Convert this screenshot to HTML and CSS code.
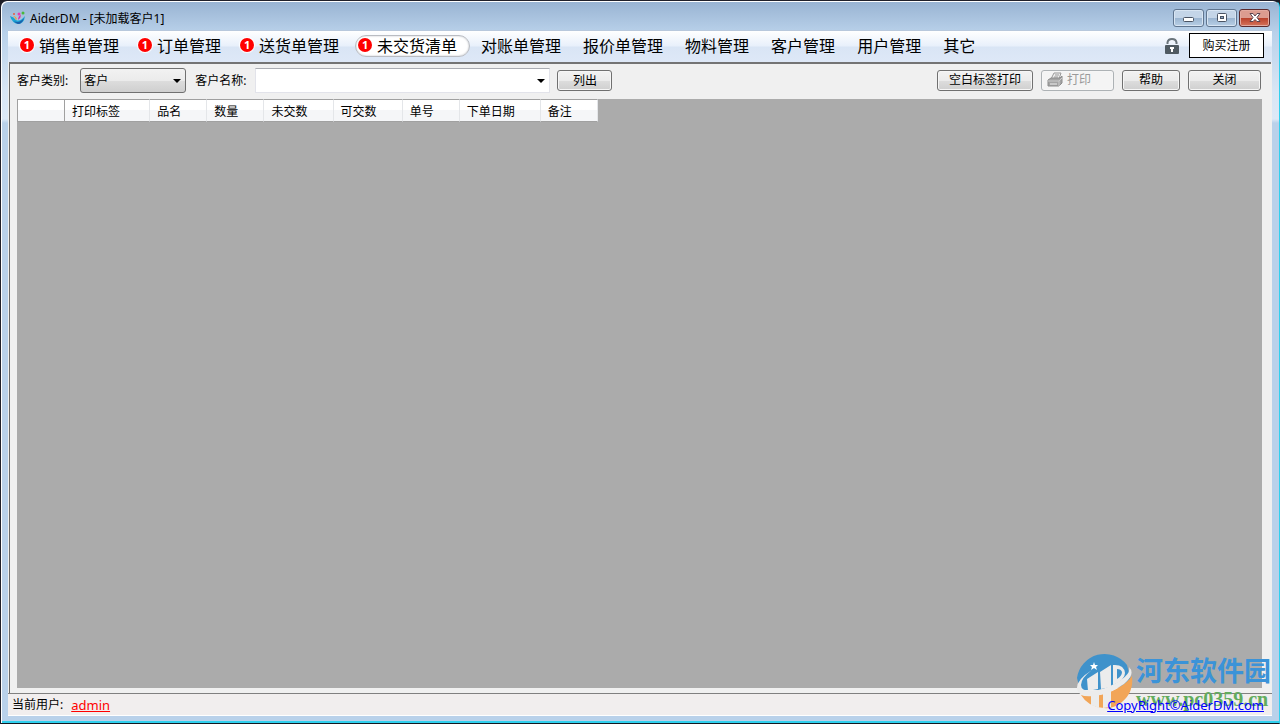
FILE: index.html
```html
<!DOCTYPE html>
<html lang="zh-CN">
   <head>
      <meta charset="UTF-8">
      <meta name="viewport" content="width=device-width, initial-scale=1.0">
      <title>AiderDM - [未加载客户1]</title>
      <link rel="stylesheet" href="styles.css">
   </head>
   <body>
      <div class="window">
         <header class="titlebar">
            <svg class="app-icon" width="16" height="16" viewBox="0 0 16 16">
               <path d="M0 6Q4 7 6 10Q10 12 15 6Q14 14 8 14Q2 13 0 6" fill="#1aa3d4"/>
               <path d="M4 11Q9 14 14 8Q12 14 8 14Q5 13 4 11" fill="#1c5eac"/>
               <path d="M3 6Q6 6 7 9L6 10Q5 7 3 6" fill="#f0a03c"/>
               <path d="M8 10Q8 6 11 5Q11 8 8 10" fill="#e22fa0"/>
               <circle cx="4" cy="4" r="1" fill="#e85a3c"/>
               <circle cx="9" cy="4" r="1.5" fill="#e83ab0"/>
               <circle cx="13" cy="3" r="1.5" fill="#48b83c"/>
            </svg>
            <h1>AiderDM - [未加载客户1]</h1>
            <div class="window-buttons">
               <button type="button" aria-label="最小化">
                  <svg width="14" height="12" viewBox="0 0 14 12"><rect x="1.5" y="5.5" width="10" height="4" rx="1" fill="#fff" stroke="#4a5464"/></svg>
               </button>
               <button type="button" aria-label="最大化">
                  <svg width="14" height="12" viewBox="0 0 14 12"><rect x="2.5" y="1.5" width="9" height="8" rx="1" fill="#fff" stroke="#4a5464"/><rect x="5.5" y="4.5" width="3" height="2" fill="#8aa4c2" stroke="#4a5464"/></svg>
               </button>
               <button type="button" class="window-close" aria-label="关闭窗口">
                  <svg width="14" height="12" viewBox="0 0 14 12"><path d="M2 1.5H5L7 4L9 1.5H12L9 5.5L12 9.5H9L7 7.5L5 9.5H2L5 5.5Z" fill="#fff" stroke="#5a4450"/></svg>
               </button>
            </div>
         </header>
         <div class="client">
            <nav class="menu">
               <a href="#"><span class="badge">1</span>销售单管理</a>
               <a href="#"><span class="badge">1</span>订单管理</a>
               <a href="#"><span class="badge">1</span>送货单管理</a>
               <a href="#" class="active"><span class="badge">1</span>未交货清单</a>
               <a href="#">对账单管理</a>
               <a href="#">报价单管理</a>
               <a href="#">物料管理</a>
               <a href="#">客户管理</a>
               <a href="#">用户管理</a>
               <a href="#">其它</a>
               <svg class="lock" width="16" height="18" viewBox="0 0 16 18">
                  <path d="M3.5 7V5.500Q4 2 8 2T12.500 5.500V7" fill="none" stroke="#6a747b" stroke-width="2"/>
                  <rect x="1" y="8" width="14" height="9" rx="1" fill="#4f5a62"/>
                  <path d="M6 10H10V12H9V15H7V12H6Z" fill="#fff"/>
               </svg>
               <button type="button" class="register">购买注册</button>
            </nav>
            <main class="panel">
               <div class="toolbar">
                  <label for="customer-type">客户类别:</label>
                  <div class="combo combo-type">
                     <select id="customer-type"><option>客户</option></select>
                  </div>
                  <label for="customer-name">客户名称:</label>
                  <div class="combo combo-name">
                     <select id="customer-name"><option></option></select>
                  </div>
                  <button type="button" class="btn btn-list">列出</button>
                  <div class="actions">
                     <button type="button" class="btn btn-blank">空白标签打印</button>
                     <button type="button" class="btn btn-print" disabled>
                        <svg width="16" height="16" viewBox="0 0 16 16">
                           <path d="M4 7L7 1H14L12 7Z" fill="#eee" stroke="#999"/>
                           <path d="M8 3H12M7 5H11" stroke="#999"/>
                           <path d="M1 8L4 6H13L15 4V11L12 14H1Z" fill="#a4a4a4" stroke="#8c8c8c"/>
                           <path d="M1 9H12L15 6M12 9V14" fill="none" stroke="#ccc"/>
                           <path d="M3 12H10" stroke="#eee"/>
                        </svg>打印
                     </button>
                     <button type="button" class="btn btn-help">帮助</button>
                     <button type="button" class="btn btn-close">关闭</button>
                  </div>
               </div>
               <div class="grid">
                  <table>
                     <colgroup>
                        <col class="col-head"><col class="col-print"><col class="col-s"><col class="col-s"><col class="col-m"><col class="col-m"><col class="col-s"><col class="col-date"><col class="col-s">
                     </colgroup>
                     <thead>
                        <tr>
                           <th></th>
                           <th>打印标签</th>
                           <th>品名</th>
                           <th>数量</th>
                           <th>未交数</th>
                           <th>可交数</th>
                           <th>单号</th>
                           <th>下单日期</th>
                           <th>备注</th>
                        </tr>
                     </thead>
                  </table>
               </div>
            </main>
            <footer class="statusbar">
               <span>当前用户:</span>
               <a href="#" class="user">admin</a>
               <a href="#" class="copyright">CopyRight©AiderDM.com</a>
            </footer>
         </div>
         <div class="watermark">
            <svg width="58" height="58" viewBox="0 0 58 58">
               <path d="M1 26A28 28 0 0 1 51 13L56 32L28 38H4Z" fill="#3f92cb"/>
               <path d="M56 24Q58 40 46 50Q38 57 28 56Q12 55 5 43Q26 46 42 36Q52 30 56 24" fill="#f2a557"/>
               <path d="M16 18Q0 28 1 37Q3 46 18 44Q34 42 48 32Q60 22 53 15Q55 21 45 28Q30 38 15 39Q5 39 5 33Q5 26 16 18" fill="#ececec"/>
               <path d="M11 27L22 20V37L12 39ZM24 20L35 13V35L25 37Z" fill="#ececec"/>
               <path d="M37 13Q48 12 49 21Q49 28 37 33ZM41 17V27Q46 24 46 20Q45 17 41 17" fill="#ececec" fill-rule="evenodd"/>
               <path d="M15 43L23 42V56L15 53ZM27 41L35 38V55L27 56Z" fill="#ececec"/>
               <path d="M18 10L19 13L22 13L20 15L21 18L18 16L15 18L16 15L14 13L17 13Z" fill="#fff"/>
            </svg>
            <div>
               <div class="watermark-name">河东软件园</div>
               <div class="watermark-url">www.pc0359.cn</div>
            </div>
         </div>
      </div>
   </body>
</html>
```
FILE: styles.css
```css
* {
box-sizing: border-box;
}
body {
margin: 0;
background: #1c1c24;
color: #000;
font-family: "Noto Sans", "Noto Sans CJK SC", sans-serif;
font-size: 12px;
line-height: 16px;
}
button, select {
font: inherit;
color: inherit;
}
.window {
position: relative;
display: flex;
flex-direction: column;
min-height: 100vh;
padding: 1px 7px 7px;
border: 1px solid #20202a;
border-right-color: #30d0ee;
border-bottom-color: #141820;
border-radius: 7px 7px 0 0;
background: linear-gradient(#98b3d2, #b9d1ea 32px, #d8e6f5 90px, #dce9f7 118px, #b9d1ea 122px);
box-shadow: inset 1px 1px 0 #fff, inset 0 -2px 0 #30d0ee;
}
.titlebar {
display: flex;
align-items: center;
height: 28px;
padding-left: 2px;
}
.titlebar h1 {
flex: 1;
margin: 5px 0 0 4px;
font-size: 12px;
font-weight: 400;
}
.app-icon {
margin-top: 4px;
}
.window-buttons {
display: flex;
gap: 2px;
padding: 4px 2px 0 0;
}
.window-buttons button {
display: flex;
align-items: center;
justify-content: center;
width: 31px;
height: 18px;
padding: 0;
border: 1px solid #60758f;
border-radius: 3px;
background: linear-gradient(#c4d5e8 48%, #9ab4d0 50%, #b8cfe6);
box-shadow: inset 0 0 0 1px #d8e5f3;
}
.window-buttons .window-close {
border-color: #5c2b2e;
background: linear-gradient(#dc9c90 48%, #b9402b 50%, #d5745c);
box-shadow: inset 0 0 0 1px #e3aaa0;
}
.client {
display: flex;
flex: 1;
flex-direction: column;
border-top: 1px solid #b8c8dc;
background: #f0f0f0;
}
.menu {
display: flex;
align-items: center;
height: 31px;
padding: 0 8px 2px 9px;
background: linear-gradient(#fff, #e8f0fb 48%, #d9e5f5 52%, #dee8f7);
}
.menu a {
display: flex;
align-items: center;
height: 22px;
margin-right: 10px;
padding: 0 6px;
color: #000;
font-size: 16px;
text-decoration: none;
}
.badge {
width: 14px;
height: 14px;
margin: 0 5px 2px -3px;
border-radius: 50%;
background: #f00;
box-shadow: 0 0 1px 1px #fff;
color: #fff;
font-size: 11px;
font-weight: 700;
line-height: 14px;
text-align: center;
}
.menu .active {
margin-right: 5px;
padding: 0 12px 0 5px;
border: 1px solid #b9bcc2;
border-radius: 11px;
background: #fff;
box-shadow: inset 0 0 2px #b9bcc2;
}
.lock {
margin-left: auto;
}
.register {
width: 75px;
height: 25px;
margin-left: 9px;
padding: 0;
border: 1px solid #000;
background: #fff;
}
.panel {
display: flex;
flex: 1;
flex-direction: column;
margin: 0 1px;
padding: 0 9px 5px 7px;
border-top: 2px solid #747474;
border-left: 1px solid #696969;
}
.toolbar {
display: flex;
align-items: center;
height: 35px;
padding-bottom: 2px;
}
.combo {
position: relative;
}
.combo::after {
content: "";
position: absolute;
top: 11px;
right: 5px;
border: 4px solid transparent;
border-top-color: #000;
border-bottom: 0;
pointer-events: none;
}
.combo select {
appearance: none;
display: block;
width: 100%;
height: 25px;
padding: 0 3px;
border: 1px solid #707070;
border-radius: 3px;
background: linear-gradient(#f2f2f2, #ebebeb 50%, #ddd 51%, #cfcfcf);
}
.combo-type {
width: 106px;
margin: 0 9px 0 12px;
}
.combo-name {
width: 295px;
margin: 0 7px 0 9px;
}
.combo-name select {
border-color: #abadb3 #e2e3ea #e2e3ea;
border-radius: 0;
background: #fff;
}
.btn {
height: 21px;
padding: 0;
border: 1px solid #707070;
border-radius: 3px;
background: linear-gradient(#f2f2f2, #ebebeb 50%, #ddd 51%, #cfcfcf);
box-shadow: inset 0 0 0 1px #f6f6f6;
line-height: 18px;
}
.btn-list {
width: 55px;
}
.actions {
display: flex;
gap: 8px;
margin-left: auto;
padding: 0 1px 1px 0;
}
.btn-blank {
width: 96px;
}
.btn-print {
display: flex;
align-items: center;
gap: 4px;
width: 73px;
padding-left: 5px;
border-color: #adb2b5;
background: #f4f4f4;
color: #9a9a9a;
}
.btn-help {
width: 58px;
}
.btn-close {
width: 73px;
}
.grid {
flex: 1;
background: #ababab;
}
table {
width: 581px;
table-layout: fixed;
border-collapse: separate;
border-spacing: 0;
}
th {
height: 23px;
padding: 3px 0 0 7px;
border-top: 1px solid #a0a0a0;
border-right: 1px solid #e4e6e9;
border-bottom: 1px solid #a0a0a0;
background: linear-gradient(#fff 45%, #f5f6f8 50%, #f5f6f8);
font-weight: 400;
line-height: 16px;
text-align: left;
}
th:first-child {
border: 1px solid #a0a0a0;
}
.col-head {
width: 48px;
}
.col-print {
width: 85px;
}
.col-s {
width: 57px;
}
.col-m {
width: 69px;
}
.col-date {
width: 81px;
}
.statusbar {
display: flex;
align-items: center;
height: 23px;
padding: 0 8px 0 4px;
border-top: 1px solid #808080;
border-bottom: 1px solid #fff;
background: #f1eeee;
}
.statusbar a {
font-size: 13px;
}
.user {
margin-left: 8px;
color: #f00;
}
.copyright {
position: relative;
z-index: 1;
margin-left: auto;
color: #00f;
}
.watermark {
position: absolute;
right: 8px;
bottom: 12px;
display: flex;
gap: 2px;
pointer-events: none;
}
.watermark-name {
height: 35px;
color: #3b93d8;
font-size: 27px;
font-weight: 700;
line-height: 38px;
}
.watermark-url {
color: #62ac5d;
font-family: "Liberation Serif", serif;
font-size: 20px;
font-weight: 700;
line-height: 24px;
}
```
